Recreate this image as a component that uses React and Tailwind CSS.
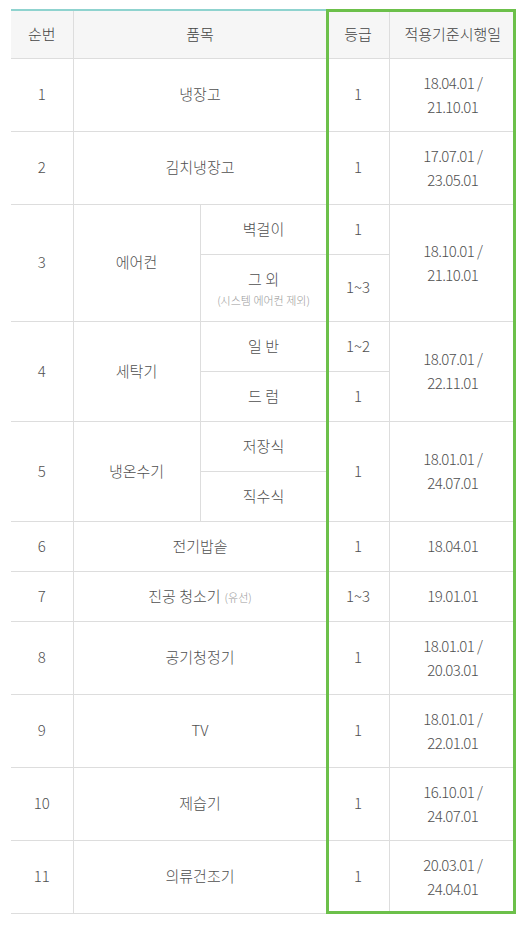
const rows = [
  { no: '1', name: '냉장고', grade: '1', date: ['18.04.01 /', '21.10.01'], h: 'h-[73px]' },
  { no: '2', name: '김치냉장고', grade: '1', date: ['17.07.01 /', '23.05.01'], h: 'h-[73px]' },
]

const rowsB = [
  { no: '6', name: '전기밥솥', grade: '1', date: ['18.04.01'], h: 'h-[50px]' },
  { no: '7', name: '진공 청소기', sub: '(유선)', grade: '1~3', date: ['19.01.01'], h: 'h-[50px]' },
  { no: '8', name: '공기청정기', grade: '1', date: ['18.01.01 /', '20.03.01'], h: 'h-[73px]' },
  { no: '9', name: 'TV', grade: '1', date: ['18.01.01 /', '22.01.01'], h: 'h-[73px]' },
  { no: '10', name: '제습기', grade: '1', date: ['16.10.01 /', '24.07.01'], h: 'h-[73px]' },
  { no: '11', name: '의류건조기', grade: '1', date: ['20.03.01 /', '24.04.01'], h: 'h-[73px]' },
]

const td = 'border border-[#dddddd] text-center align-middle p-0'

function Dates({ date }) {
  return (
    <div className="leading-[24px] tracking-[-0.6px]">
      {date.map((d) => (
        <div key={d}>{d}</div>
      ))}
    </div>
  )
}

function SimpleRow({ r }) {
  return (
    <tr className={r.h}>
      <td className={`${td} border-l-0`}>{r.no}</td>
      <td className={td} colSpan={2}>
        {r.name}
        {r.sub && <span className="ml-1 text-[11px] text-[#999]">{r.sub}</span>}
      </td>
      <td className={td}>{r.grade}</td>
      <td className={`${td} border-r-0`}>
        <Dates date={r.date} />
      </td>
    </tr>
  )
}

export default function App() {
  return (
    <div className="min-h-[927px] bg-white pl-[11px] pt-[9px]" style={{ fontFamily: '"Noto Sans CJK KR", "Noto Sans", sans-serif' }}>
      <div className="relative w-[505px]">
        <table className="w-full table-fixed border-collapse border-t-2 border-t-[#8fd3cf] text-[15px] font-light text-[#505050]">
          <colgroup>
            <col className="w-[62px]" />
            <col className="w-[127px]" />
            <col className="w-[127px]" />
            <col className="w-[62px]" />
            <col className="w-[127px]" />
          </colgroup>
          <thead>
            <tr className="h-[48px] bg-[#f6f6f6] text-[#444]">
              <th className={`${td} border-l-0 font-light`}>순번</th>
              <th className={`${td} font-light`} colSpan={2}>품목</th>
              <th className={`${td} font-light`}>등급</th>
              <th className={`${td} border-r-0 font-light`}>적용기준시행일</th>
            </tr>
          </thead>
          <tbody>
            {rows.map((r) => (
              <SimpleRow key={r.no} r={r} />
            ))}

            <tr className="h-[50px]">
              <td className={`${td} border-l-0`} rowSpan={2}>3</td>
              <td className={td} rowSpan={2}>에어컨</td>
              <td className={td}>벽걸이</td>
              <td className={td}>1</td>
              <td className={`${td} border-r-0`} rowSpan={2}>
                <Dates date={['18.10.01 /', '21.10.01']} />
              </td>
            </tr>
            <tr className="h-[67px]">
              <td className={td}>
                <div className="leading-[24px]">그 외</div>
                <div className="text-[11px] leading-[18px] text-[#999]">(시스템 에어컨 제외)</div>
              </td>
              <td className={td}>1~3</td>
            </tr>

            <tr className="h-[50px]">
              <td className={`${td} border-l-0`} rowSpan={2}>4</td>
              <td className={td} rowSpan={2}>세탁기</td>
              <td className={td}>일 반</td>
              <td className={td}>1~2</td>
              <td className={`${td} border-r-0`} rowSpan={2}>
                <Dates date={['18.07.01 /', '22.11.01']} />
              </td>
            </tr>
            <tr className="h-[50px]">
              <td className={td}>드 럼</td>
              <td className={td}>1</td>
            </tr>

            <tr className="h-[50px]">
              <td className={`${td} border-l-0`} rowSpan={2}>5</td>
              <td className={td} rowSpan={2}>냉온수기</td>
              <td className={td}>저장식</td>
              <td className={td} rowSpan={2}>1</td>
              <td className={`${td} border-r-0`} rowSpan={2}>
                <Dates date={['18.01.01 /', '24.07.01']} />
              </td>
            </tr>
            <tr className="h-[50px]">
              <td className={td}>직수식</td>
            </tr>

            {rowsB.map((r) => (
              <SimpleRow key={r.no} r={r} />
            ))}
          </tbody>
        </table>
        {/* highlight box over grade + date columns */}
        <div className="pointer-events-none absolute left-[315px] top-0 h-[905px] w-[190px] border-[3px] border-[#6cc04a]" />
      </div>
    </div>
  )
}
